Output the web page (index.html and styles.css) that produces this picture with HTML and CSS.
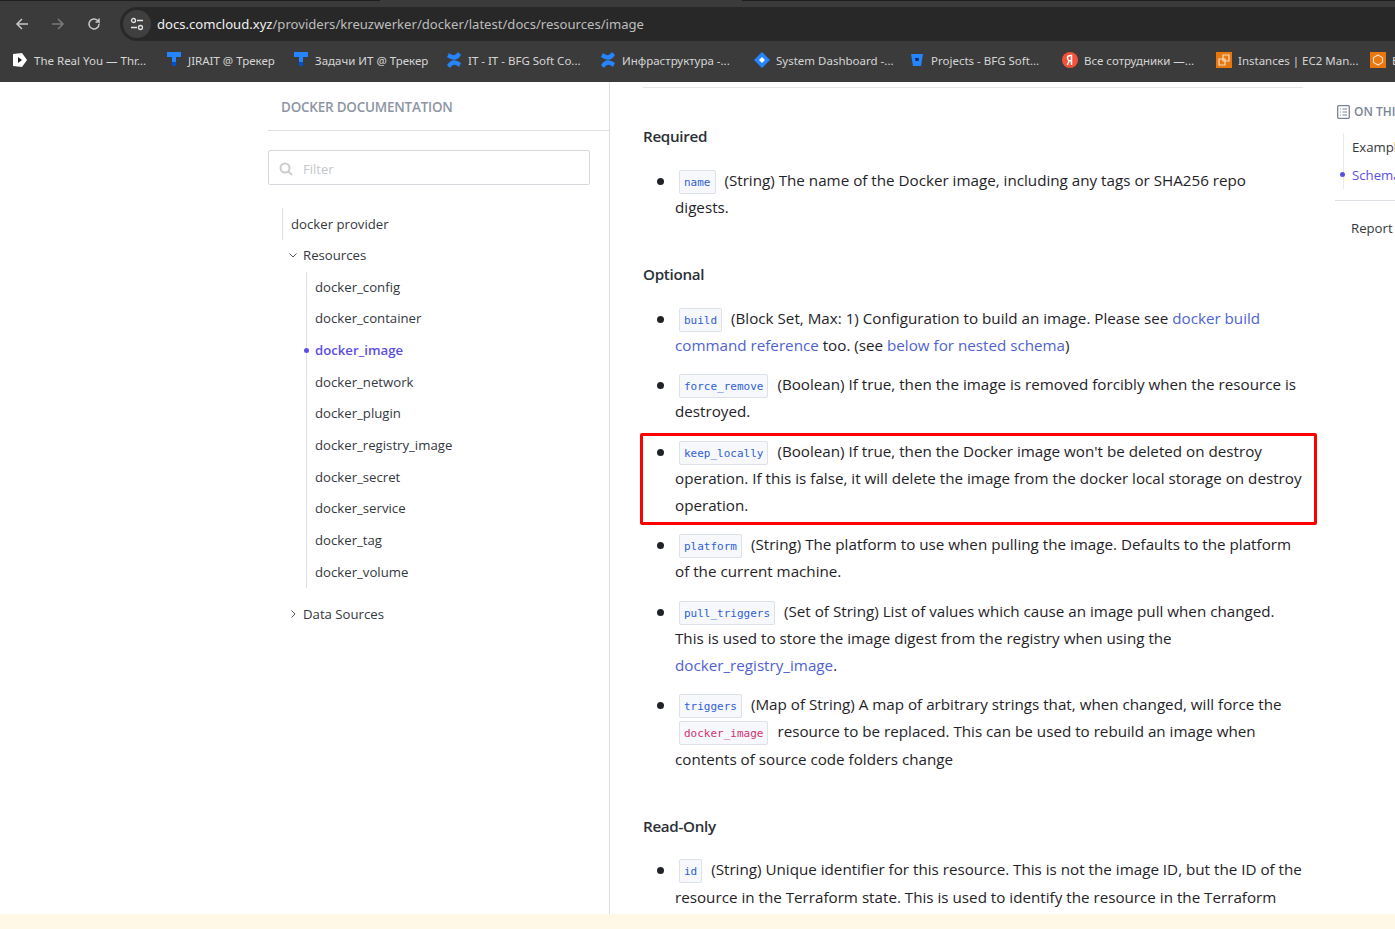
FILE: index.html
```html
<!DOCTYPE html>
<html>

<head>
    <title>Docker image resource</title>
    <meta name='viewport' content='width=device-width'>
    <link rel="stylesheet" href="styles.css">
</head>

<body>
    <div class="browser">
        <div class="tabstrip"><div class="tabstrip-left"></div><div class="tabstrip-tab"></div><div class="tabstrip-right"></div></div>
        <div class="toolbar">
            <svg class="nav-icon" viewBox="0 0 16 16"><path d="M14 8H3M8 3L3 8l5 5" fill="none" stroke="#c7c7c7" stroke-width="1.5"/></svg>
            <svg class="nav-icon" viewBox="0 0 16 16"><path d="M2 8h11M8 3l5 5-5 5" fill="none" stroke="#7a7a7a" stroke-width="1.5"/></svg>
            <svg class="nav-icon" viewBox="0 0 16 16"><path d="M13 8a5 5 0 1 1-1.6-3.7L13 6V2.5M13 6H9.5" fill="none" stroke="#c7c7c7" stroke-width="1.5"/></svg>
            <div class="omnibox">
                <span class="site-info">
                    <svg width="14" height="14" viewBox="0 0 14 14"><path d="M7 3.500h6M1 10.500h6" stroke="#e3e3e3" stroke-width="1.400"/><circle cx="3.500" cy="3.500" r="2" fill="none" stroke="#e3e3e3" stroke-width="1.300"/><circle cx="10.500" cy="10.500" r="2" fill="none" stroke="#e3e3e3" stroke-width="1.300"/></svg>
                </span>
                <span class="url"><span class="host">docs.comcloud.xyz</span>/providers/kreuzwerker/docker/latest/docs/resources/image</span>
            </div>
        </div>
        <div class="bookmarks">
            <div class="bm w-thr"><svg viewBox="0 0 16 16"><path d="M1 2l9-1 5 7-5 7-9-1z" fill="#fff"/><path d="M6 5l4 3-4 3z" fill="#222"/></svg><span>The Real You — Thr...</span></div>
            <div class="bm w-jira"><svg viewBox="0 0 16 16"><path d="M1 0h14v5H10v5H6V5H1z" fill="#2684ff"/><path d="M6 10h4v4H6z" fill="#0052cc"/></svg><span>JIRAIT @ Трекер</span></div>
            <div class="bm w-task"><svg viewBox="0 0 16 16"><path d="M1 0h14v5H10v5H6V5H1z" fill="#2684ff"/><path d="M6 10h4v4H6z" fill="#0052cc"/></svg><span>Задачи ИТ @ Трекер</span></div>
            <div class="bm w-conf"><svg viewBox="0 0 16 16"><path d="M1 13c4-6 8-6 14-2l-2 4c-4-3-6-3-9 1zM15 3c-4 6-8 6-14 2l2-4c4 3 6 3 9-1z" fill="#2684ff"/></svg><span>IT - IT - BFG Soft Co...</span></div>
            <div class="bm w-infra"><svg viewBox="0 0 16 16"><path d="M1 13c4-6 8-6 14-2l-2 4c-4-3-6-3-9 1zM15 3c-4 6-8 6-14 2l2-4c4 3 6 3 9-1z" fill="#2684ff"/></svg><span>Инфраструктура -...</span></div>
            <div class="bm w-sys"><svg viewBox="0 0 16 16"><path d="M8 0l8 8-8 8-8-8z" fill="#2684ff"/><path d="M8 5l3 3-3 3-3-3z" fill="#fff"/></svg><span>System Dashboard -...</span></div>
            <div class="bm w-proj"><svg viewBox="0 0 16 16"><path d="M2 2h12l-2 12H4z" fill="#2684ff"/><path d="M6 6h4l-.5 3h-3z" fill="#0b2f6b"/></svg><span>Projects - BFG Soft...</span></div>
            <div class="bm w-ya"><svg viewBox="0 0 16 16"><circle cx="8" cy="8" r="8" fill="#f4513a"/><path d="M9.500 13V3.500H8.200C6.600 3.500 5.500 4.500 5.500 6S6.300 8.300 7.300 8.700L5.300 13M9.500 8.700H8" fill="none" stroke="#fff" stroke-width="1.500"/></svg><span>Все сотрудники —...</span></div>
            <div class="bm w-ec2"><svg viewBox="0 0 16 16"><path d="M0 0h16v16H0z" fill="#e8770f"/><path d="M7 3h6v6H7zM3 7h6v6H3z" fill="none" stroke="#f6dcc4" stroke-width="1.200"/></svg><span>Instances | EC2 Man...</span></div>
            <div class="bm"><svg viewBox="0 0 16 16"><path d="M0 0h16v16H0z" fill="#e8770f"/><path d="M8 3l4.500 2.500v5L8 13l-4.500-2.500v-5z" fill="none" stroke="#f6dcc4" stroke-width="1.200"/></svg><span>B</span></div>
        </div>
    </div>

    <div class="page">
        <aside class="sidebar">
            <div class="side-title">DOCKER DOCUMENTATION</div>
            <div class="filter-wrap">
                <div class="filter">
                    <svg width="14" height="14" viewBox="0 0 14 14"><circle cx="6" cy="6" r="4.500" fill="none" stroke="#ccc" stroke-width="2"/><path d="M9.500 9.500L13 13" stroke="#ccc" stroke-width="2"/></svg>
                    <span>Filter</span>
                </div>
            </div>
            <nav class="tree">
                <a class="tree-top">docker provider</a>
                <a class="tree-group"><svg width="8" height="8" viewBox="0 0 8 8"><path d="M.5 2.500L4 6l3.500-3.500" fill="none" stroke="#555"/></svg>Resources</a>
                <div class="tree-sub">
                    <a>docker_config</a>
                    <a>docker_container</a>
                    <a class="active">docker_image</a>
                    <a>docker_network</a>
                    <a>docker_plugin</a>
                    <a>docker_registry_image</a>
                    <a>docker_secret</a>
                    <a>docker_service</a>
                    <a>docker_tag</a>
                    <a>docker_volume</a>
                </div>
                <a class="tree-group closed"><svg width="8" height="8" viewBox="0 0 8 8"><path d="M2.500.5L6 4 2.500 7.500" fill="none" stroke="#555"/></svg>Data Sources</a>
            </nav>
        </aside>

        <main class="content">
            <div class="top-rule"></div>

            <h4>Required</h4>
            <ul>
                <li><code>name</code> (String) The name of the Docker image, including any tags or SHA256 repo digests.</li>
            </ul>

            <h4 class="next">Optional</h4>
            <ul>
                <li><code>build</code> (Block Set, Max: 1) Configuration to build an image. Please see <a>docker build command reference</a> too. (see <a>below for nested schema</a>)</li>
                <li><code>force_remove</code> (Boolean) If true, then the image is removed forcibly when the resource is destroyed.</li>
                <li class="marked"><code>keep_locally</code> (Boolean) If true, then the Docker image won't be deleted on destroy operation. If this is false, it will delete the image from the docker local storage on destroy operation.</li>
                <li><code>platform</code> (String) The platform to use when pulling the image. Defaults to the platform of the current machine.</li>
                <li><code>pull_triggers</code> (Set of String) List of values which cause an image pull when changed. This is used to store the image digest from the registry when using the <a>docker_registry_image</a>.</li>
                <li><code>triggers</code> (Map of String) A map of arbitrary strings that, when changed, will force the <code class="red">docker_image</code> resource to be replaced. This can be used to rebuild an image when contents of source code folders change</li>
            </ul>

            <h4 class="next">Read-Only</h4>
            <ul>
                <li><code>id</code> (String) Unique identifier for this resource. This is not the image ID, but the ID of the resource in the Terraform state. This is used to identify the resource in the Terraform state.</li>
            </ul>
        </main>

        <aside class="rail">
            <div class="rail-title">
                <svg width="13" height="14" viewBox="0 0 13 14"><rect x=".7" y=".7" width="11.600" height="12.600" rx="1" fill="none" stroke="#7b8494" stroke-width="1.300"/><path d="M3 4h1M5.500 4H10M3 7h1M5.500 7H10M3 10h1M5.500 10H10" stroke="#7b8494"/></svg>
                <span>ON THIS PAGE</span>
            </div>
            <div class="rail-links">
                <a>Example Usage</a>
                <a class="active">Schema</a>
            </div>
            <div class="rail-report">Report an issue</div>
        </aside>
    </div>

    <div class="notice"></div>
</body>

</html>
```

FILE: styles.css
```css
* {
    box-sizing: border-box;
}

html, body {
    height: 100%;
}

body {
    margin: 0;
    display: flex;
    flex-direction: column;
    overflow: hidden;
    background: #fff;
    color: #1f2328;
    font-family: "Open Sans", "Noto Sans", sans-serif;
}

/* browser chrome */
.browser {
    flex: none;
    height: 82px;
    background: #3b3b3b;
    font-family: "Noto Sans", sans-serif;
}

.tabstrip {
    height: 7px;
    display: flex;
    align-items: flex-start;
}

.tabstrip-left {
    width: 380px;
    height: 1px;
    background: #1f1f1f;
}

.tabstrip-tab {
    width: 362px;
}

.tabstrip-right {
    flex: 1;
    height: 1px;
    background: #1f1f1f;
}

.toolbar {
    height: 34px;
    padding-left: 14px;
    display: flex;
    align-items: center;
}

.nav-icon {
    width: 16px;
    height: 16px;
    margin-right: 20px;
    flex: none;
}

.omnibox {
    flex: 1;
    height: 34px;
    margin-left: -2px;
    padding-left: 3px;
    display: flex;
    align-items: center;
    background: #282828;
    border-radius: 17px 0 0 17px;
}

.site-info {
    width: 28px;
    height: 28px;
    border-radius: 50%;
    background: #3f3f3f;
    display: flex;
    align-items: center;
    justify-content: center;
    margin-right: 6px;
}

.url {
    font-size: 13.100px;
    color: #bdbdbd;
    white-space: nowrap;
}

.host {
    color: #f1f1f1;
}

.bookmarks {
    height: 41px;
    padding: 0 0 3px 12px;
    display: flex;
    align-items: center;
    overflow: hidden;
    white-space: nowrap;
    font-size: 11.500px;
    color: #d6d6d6;
}

.bm {
    flex: none;
    display: flex;
    align-items: center;
}

.bm svg {
    width: 16px;
    height: 16px;
    margin-right: 6px;
    flex: none;
}

.w-thr { width: 154px; }
.w-jira { width: 127px; }
.w-task { width: 153px; }
.w-conf { width: 154px; }
.w-infra { width: 154px; }
.w-sys { width: 155px; }
.w-proj { width: 153px; }
.w-ya { width: 154px; }
.w-ec2 { width: 154px; }

/* page */
.page {
    flex: 1;
    min-height: 0;
    display: flex;
    overflow: hidden;
}

.sidebar {
    flex: none;
    width: 342px;
    margin-left: 268px;
    border-right: 1px solid #dcdfe4;
    font-size: 13.200px;
}

.side-title {
    height: 49px;
    padding: 16px 0 0 13px;
    border-bottom: 1px solid #dcdfe4;
    font-size: 13.450px;
    font-weight: 600;
    letter-spacing: -0.2px;
    color: #8d95a3;
}

.filter-wrap {
    padding: 19px 19px 0 0;
}

.filter {
    height: 35px;
    padding: 2px 0 0 10px;
    display: flex;
    align-items: center;
    gap: 10px;
    border: 1px solid #d5d8dc;
    border-radius: 2px;
    color: #c4c7cb;
    font-size: 13px;
}

.tree {
    padding: 23px 0 0 14px;
}

.tree a {
    display: block;
    color: #34383e;
}

.tree-top {
    height: 31.500px;
    line-height: 32px;
    padding-left: 8px;
    border-left: 1px solid #dcdfe4;
}

.tree-group {
    height: 32px;
    line-height: 31px;
    padding-left: 21px;
    position: relative;
}

.tree-group svg {
    position: absolute;
    left: 7px;
    top: 11px;
}

.tree-group.closed {
    margin-top: 10.500px;
}

.tree-sub {
    margin-left: 24px;
    border-left: 1px solid #dcdfe4;
}

.tree-sub a {
    height: 31.700px;
    line-height: 31.700px;
    padding-left: 8px;
    position: relative;
}

.tree .tree-sub .active {
    color: #5c4ee5;
    font-weight: 600;
}

.tree-sub .active::before {
    content: "";
    position: absolute;
    left: -3px;
    top: 13px;
    width: 5px;
    height: 5px;
    border-radius: 50%;
    background: #5c4ee5;
}

.content {
    flex: none;
    width: 660px;
    margin-left: 33px;
    font-size: 15.200px;
    line-height: 27.200px;
}

.top-rule {
    height: 1px;
    margin-top: 5px;
    background: #e4e6ea;
}

h4 {
    margin: 35px 0 0;
    font-size: 15.200px;
    line-height: 27.200px;
    font-weight: 600;
    letter-spacing: -0.3px;
    color: #2b2f36;
}

h4.next {
    margin-top: 39.800px;
}

ul {
    margin: 16.600px 0 0;
    padding: 0 0 0 32px;
    list-style: none;
}

li {
    position: relative;
    margin-bottom: 12px;
}

/* bullet */
li::before {
    content: "";
    position: absolute;
    left: -18px;
    top: 11px;
    width: 7px;
    height: 7px;
    border-radius: 50%;
    background: #1f2328;
}

.content a {
    color: #4f63d2;
}

/* inline so the chip doesn't push the 27px line box */
code {
    margin: 0 5px 0 4px;
    padding: 5px 4px 4px;
    line-height: 1;
    background: #f6f8fb;
    border: 1px solid #dde1e8;
    border-radius: 2px;
    font-family: "DejaVu Sans Mono", monospace;
    font-size: 11px;
    color: #2f5fd8;
}

code.red {
    color: #d1336f;
}

.marked::after {
    content: "";
    position: absolute;
    left: -35px;
    right: -14px;
    top: -5px;
    bottom: -6px;
    border: 3px solid #f00;
    border-radius: 2px;
    pointer-events: none;
}

.rail {
    flex: none;
    width: 60px;
    margin-left: 32px;
    padding-top: 21px;
    overflow: hidden;
    white-space: nowrap;
    font-size: 13.200px;
}

.rail-title {
    display: flex;
    align-items: center;
    gap: 4px;
    margin-left: 2px;
    font-size: 12px;
    font-weight: 600;
    color: #7b8494;
}

.rail-title svg {
    flex: none;
}

.rail-links {
    margin: 13px 0 0 8px;
    padding-left: 8px;
    border-left: 1px solid #e8eaed;
}

.rail-links a {
    display: block;
    height: 28px;
    line-height: 28px;
    color: #34383e;
    position: relative;
}

.rail-links .active {
    color: #5c4ee5;
}

.rail-links .active::before {
    content: "";
    position: absolute;
    left: -12px;
    top: 11px;
    width: 5px;
    height: 5px;
    border-radius: 50%;
    background: #5c4ee5;
}

.rail-report {
    margin-top: 11px;
    padding: 18px 0 0 16px;
    border-top: 1px solid #dcdfe4;
    color: #34383e;
}

.notice {
    flex: none;
    height: 15px;
    background: #fff8e6;
}
```
